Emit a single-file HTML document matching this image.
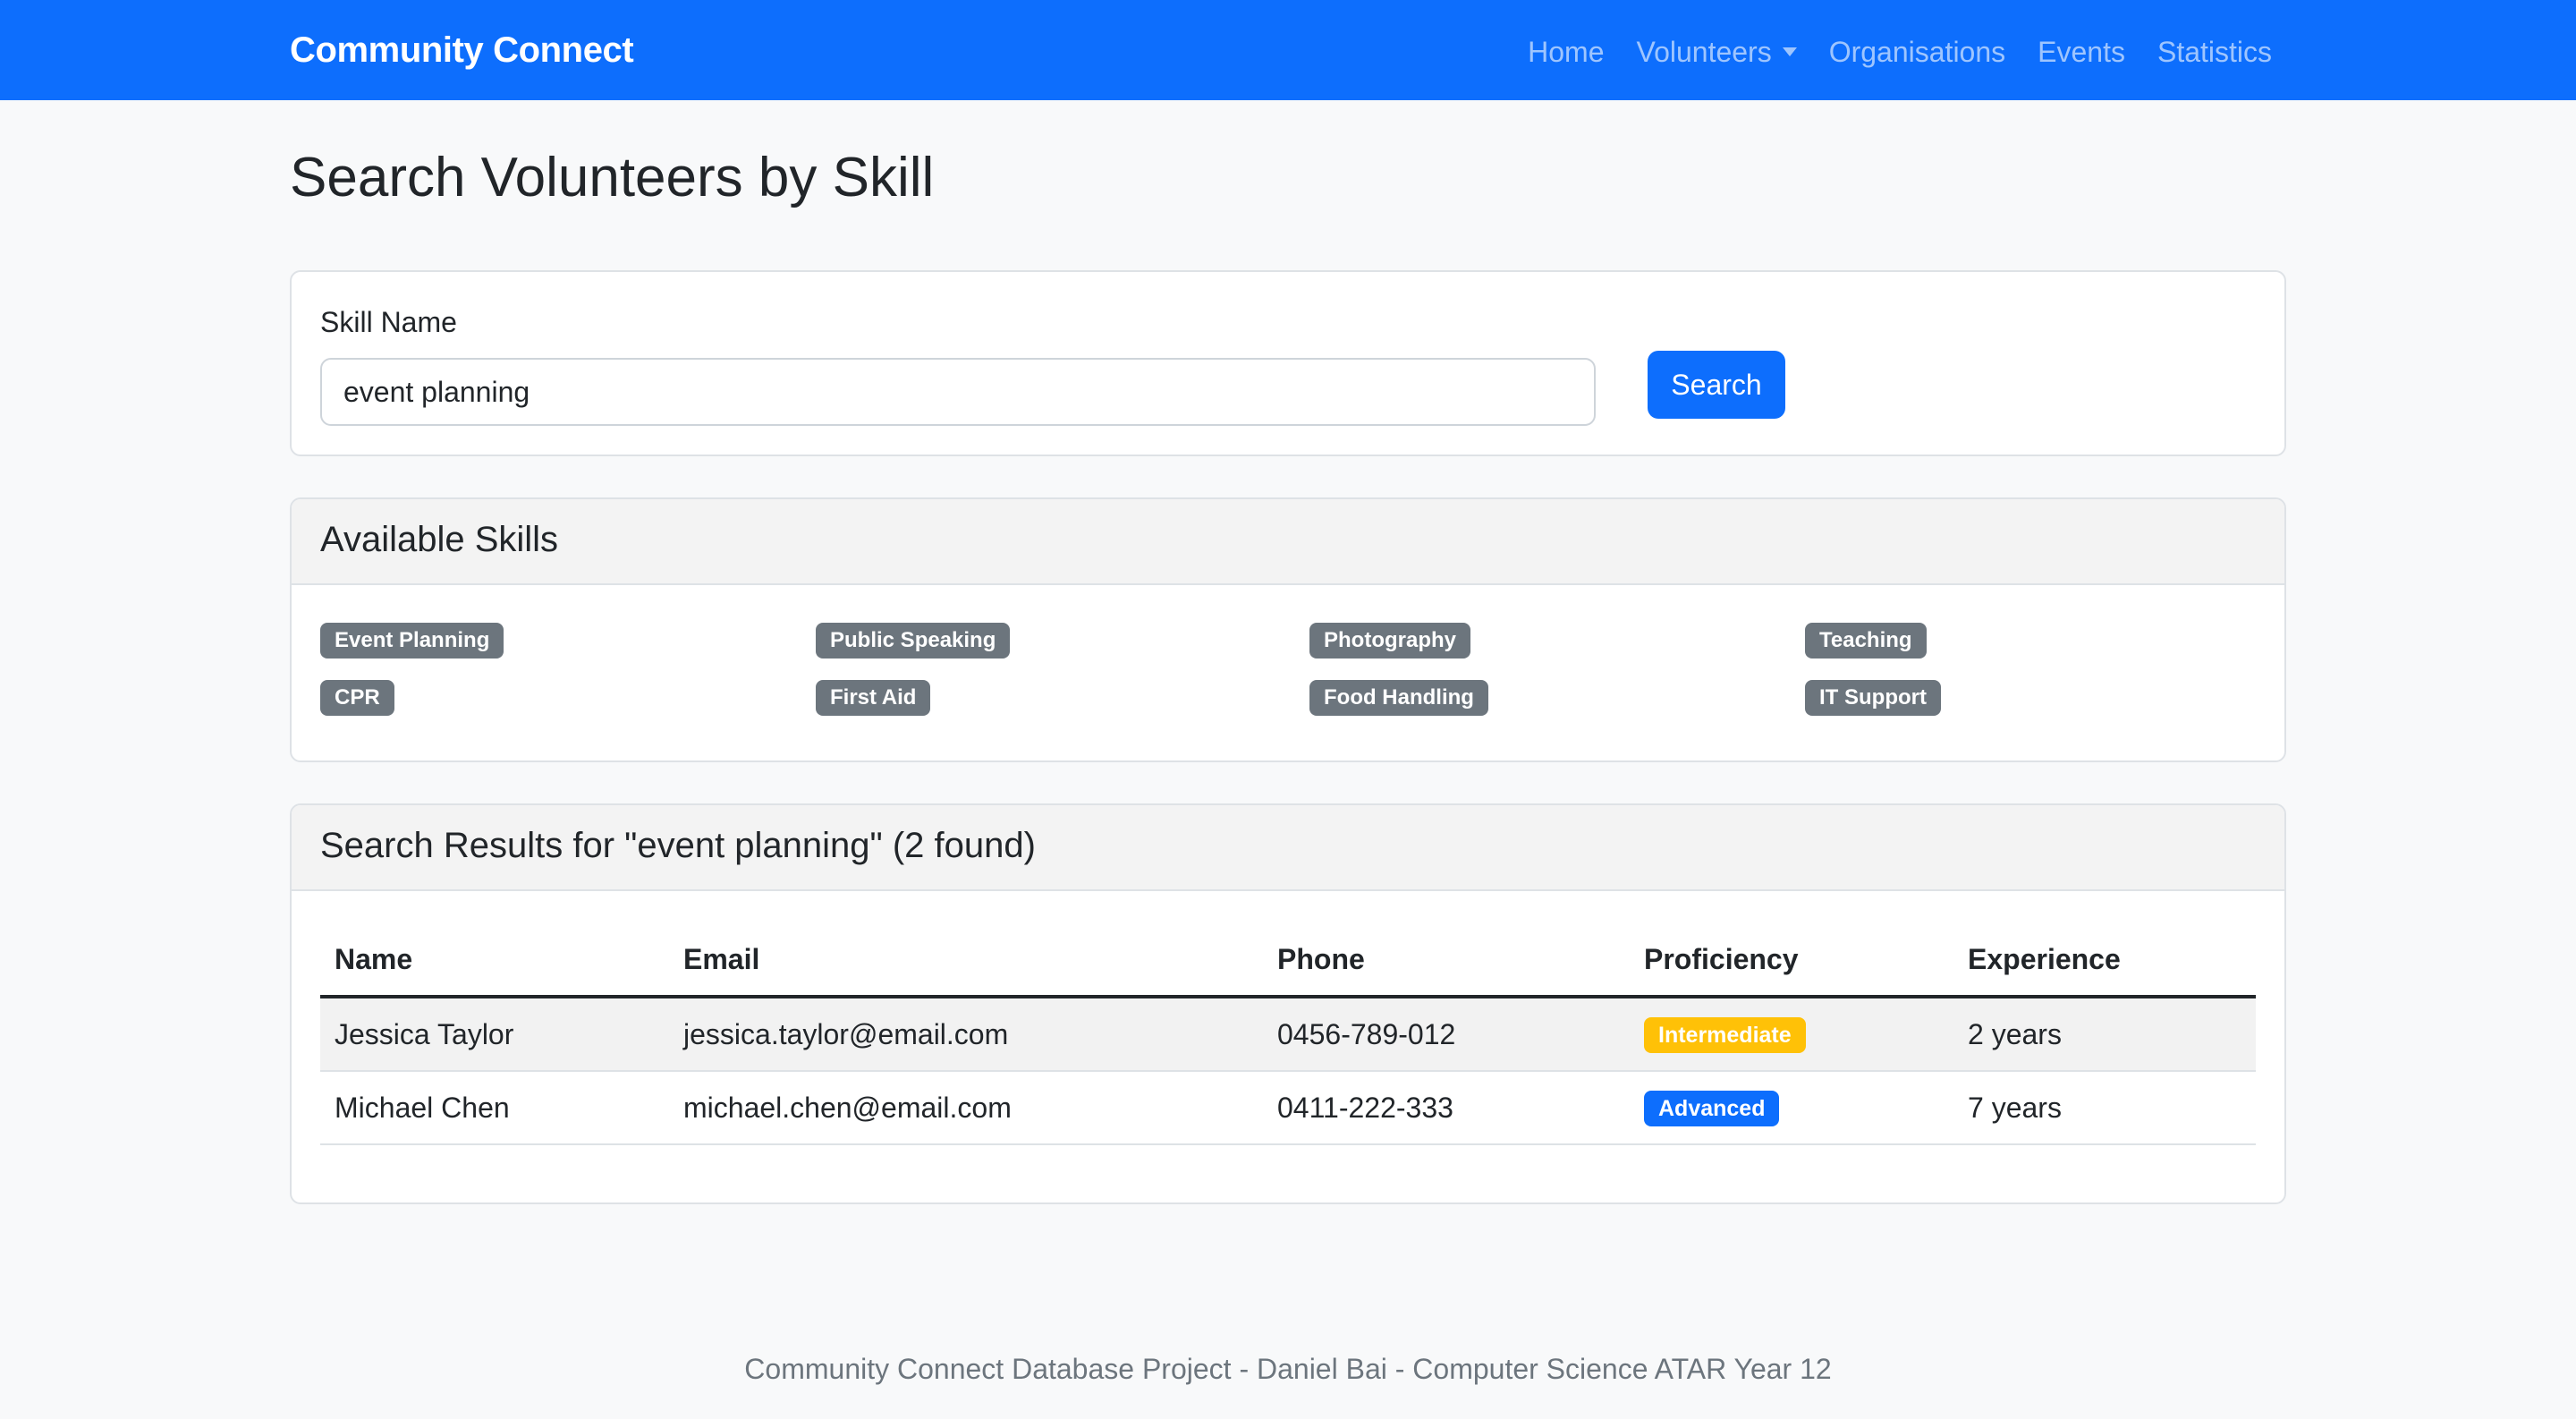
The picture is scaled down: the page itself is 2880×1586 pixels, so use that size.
<!DOCTYPE html>
<html><head><meta charset="utf-8">
<style>
html,body{margin:0;padding:0}
body{width:1440px;height:793px;zoom:2;background:#f8f9fa;font-family:"Liberation Sans",Arial,sans-serif;color:#212529;font-size:16px;position:relative;overflow:hidden}
.nav{position:absolute;left:0;top:0;width:1440px;height:56px;background:#0d6efd}
.brand{position:absolute;left:162px;top:17px;color:#fff;font-weight:bold;font-size:20px;letter-spacing:-0.2px}
.links{position:absolute;right:170px;top:20px;color:rgba(255,255,255,.6);font-size:16px;display:flex;gap:18px}
.caret{display:inline-block;border-top:5px solid rgba(255,255,255,.6);border-left:4px solid transparent;border-right:4px solid transparent;vertical-align:3px;margin-left:6px}
h1{position:absolute;left:162px;top:81px;margin:0;font-size:31px;font-weight:500;line-height:1.2}
.card{position:absolute;left:162px;width:1114px;background:#fff;border:1px solid #dee2e6;border-radius:6px;overflow:hidden}
.ch{background:#f3f3f3;border-bottom:1px solid #dee2e6;height:48px;box-sizing:border-box;padding:0 16px;font-size:20px;font-weight:500;line-height:45px}
.abs{position:absolute}
.input{left:16px;top:48px;width:713px;height:38px;box-sizing:border-box;border:1px solid #ced4da;border-radius:6px;padding:0 12px;line-height:36px}
.btn{left:758px;top:44px;width:77px;height:38px;background:#0d6efd;color:#fff;border-radius:6px;text-align:center;line-height:38px}
.badge{position:absolute;background:#6c757d;color:#fff;font-size:12px;font-weight:bold;padding:0 8px;height:20px;line-height:20px;border-radius:4px}
table{position:absolute;left:16px;top:66px;width:1082px;border-collapse:collapse;table-layout:fixed}
th,td{text-align:left;padding:0 8px;height:40px}
th{font-weight:bold;border-bottom:2px solid #212529;height:40px}
td{border-bottom:1px solid #dee2e6}
tr.s td{background:#f2f2f2}
.pb{display:inline-block;font-size:12.5px;font-weight:bold;color:#fff;padding:0 8px;height:20px;line-height:20px;border-radius:4px}
.foot{position:absolute;left:0;width:1440px;top:756px;text-align:center;color:#6c757d;font-size:16px}
</style></head><body>
<div class="nav"><div class="brand">Community Connect</div>
<div class="links"><span>Home</span><span>Volunteers<span class="caret"></span></span><span>Organisations</span><span>Events</span><span>Statistics</span></div></div>
<h1>Search Volunteers by Skill</h1>
<div class="card" style="top:151px;height:102px">
<div class="abs" style="left:16px;top:19px">Skill Name</div>
<div class="abs input">event planning</div>
<div class="abs btn">Search</div>
</div>
<div class="card" style="top:278px;height:146px">
<div class="ch">Available Skills</div>
<span class="badge" style="left:16px;top:69px">Event Planning</span>
<span class="badge" style="left:293px;top:69px">Public Speaking</span>
<span class="badge" style="left:569px;top:69px">Photography</span>
<span class="badge" style="left:846px;top:69px">Teaching</span>
<span class="badge" style="left:16px;top:101px">CPR</span>
<span class="badge" style="left:293px;top:101px">First Aid</span>
<span class="badge" style="left:569px;top:101px">Food Handling</span>
<span class="badge" style="left:846px;top:101px">IT Support</span>
</div>
<div class="card" style="top:449px;height:222px">
<div class="ch">Search Results for "event planning" (2 found)</div>
<table>
<colgroup><col style="width:195px"><col style="width:332px"><col style="width:205px"><col style="width:181px"><col></colgroup>
<tr><th>Name</th><th>Email</th><th>Phone</th><th>Proficiency</th><th>Experience</th></tr>
<tr class="s"><td>Jessica Taylor</td><td>jessica.taylor@email.com</td><td>0456-789-012</td><td><span class="pb" style="background:#ffc107">Intermediate</span></td><td>2 years</td></tr>
<tr><td>Michael Chen</td><td>michael.chen@email.com</td><td>0411-222-333</td><td><span class="pb" style="background:#0d6efd">Advanced</span></td><td>7 years</td></tr>
</table>
</div>
<div class="foot">Community Connect Database Project - Daniel Bai - Computer Science ATAR Year 12</div>
</body></html>
